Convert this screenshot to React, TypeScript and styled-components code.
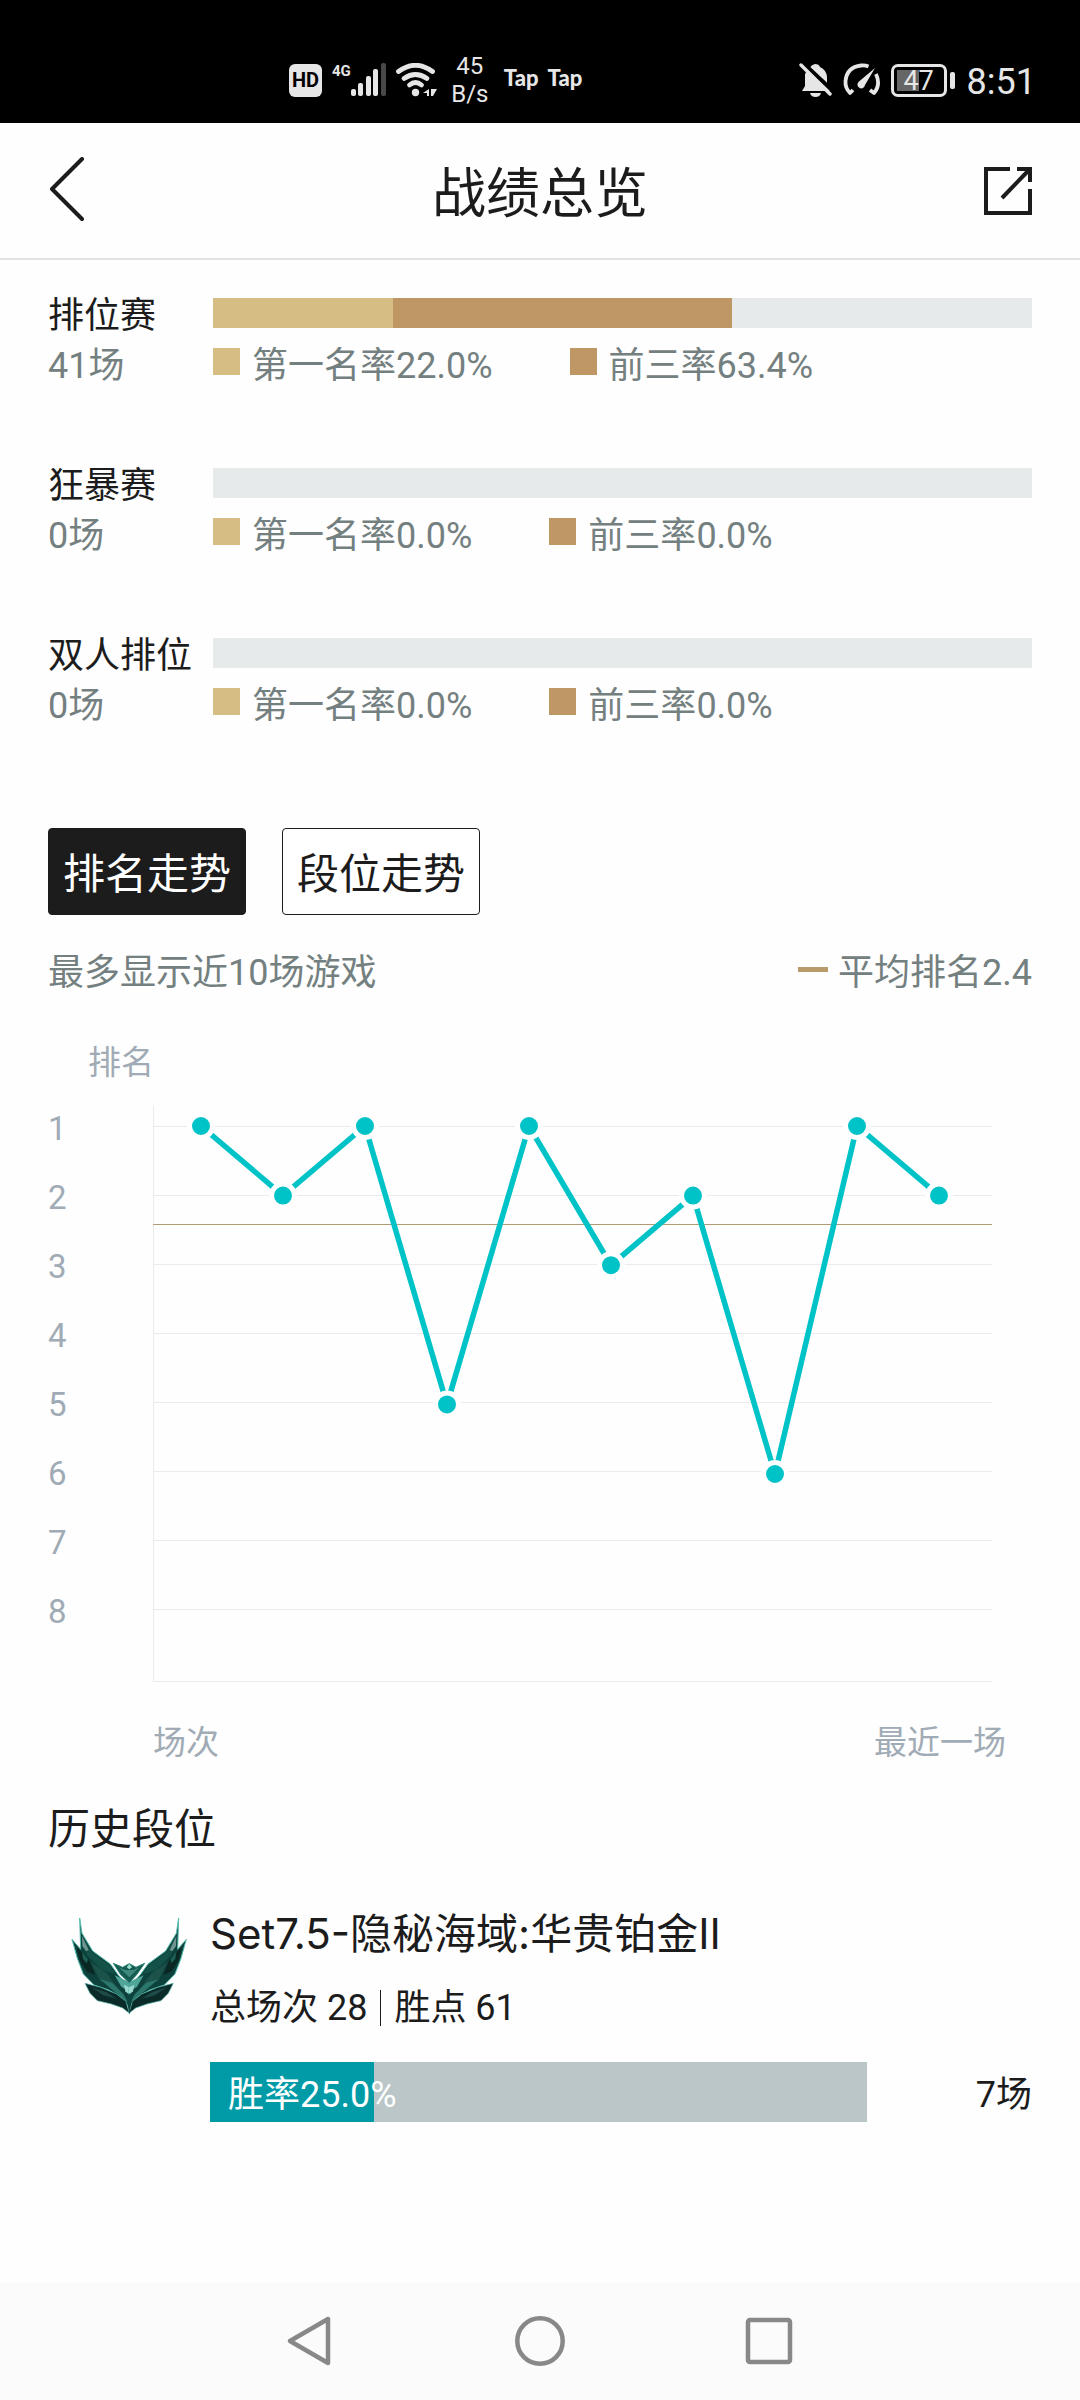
import React, { useState } from "react";
import styled, { createGlobalStyle } from "styled-components";

const FONT = 'Roboto, "Noto Sans CJK SC", sans-serif';

const color = {
  ink: "#1c1c1c",
  muted: "#748080",
  axis: "#a0abb5",
  grid: "#ebebeb",
  gold: "#d6bd84",
  bronze: "#bf9765",
  track: "#e6eaea",
  series: "#00c3c8",
  average: "#b09c74",
  status: "#e6e6e6",
};

const GlobalStyle = createGlobalStyle`
  *, *::before, *::after { box-sizing: border-box; }
  body { margin: 0; background: #fefefe; color: ${color.ink}; font-family: ${FONT}; }
  h1, h2, h3, p { margin: 0; font-weight: 400; }
  button { padding: 0; border: 0; background: none; color: inherit; font-family: inherit; }
  svg { display: block; }
`;

const Page = styled.div`
  display: flex;
  flex-direction: column;
  min-height: 100vh;
`;

/* ---------- status bar ---------- */

const StatusBar = styled.div`
  display: flex;
  justify-content: space-between;
  align-items: center;
  height: 123px;
  padding: 37px 44px 0 289px;
  background: #000;
  color: ${color.status};
`;

const StatusGroup = styled.div<{ $gap: number }>`
  display: flex;
  align-items: center;
  gap: ${(p) => p.$gap}px;
`;

const HdBadge = styled.span`
  width: 33px;
  border-radius: 6px;
  background: ${color.status};
  color: #000;
  font-size: 20px;
  font-weight: 700;
  line-height: 33px;
  text-align: center;
`;

const Signal = styled.span`
  display: flex;
  align-items: flex-start;
  font-size: 15px;
  font-weight: 700;
  line-height: 16px;
`;

const NetSpeed = styled.span`
  width: 44px;
  font-size: 24px;
  line-height: 28px;
  text-align: center;
`;

const TapMarks = styled.span`
  display: flex;
  gap: 9px;
  padding: 0 0 4px 2px;
  font-family: Lato, sans-serif;
  font-size: 22px;
  font-weight: 900;
  line-height: 28px;
`;

const Battery = styled.span`
  display: flex;
  align-items: center;
  gap: 3px;
  &::after {
    content: "";
    width: 5px;
    height: 17px;
    border-radius: 2px;
    background: ${color.status};
  }
`;

const BatteryCell = styled.span`
  width: 56px;
  height: 33px;
  border: 3px solid ${color.status};
  border-radius: 7px;
  background: linear-gradient(#666, #666) 3px 3px / 22px 21px no-repeat;
  font-size: 27px;
  line-height: 28px;
  text-align: center;
`;

const Clock = styled.time`
  padding: 4px 0 0 2px;
  font-size: 36px;
  line-height: 40px;
`;

/* ---------- header ---------- */

const Header = styled.header`
  display: grid;
  grid-template-columns: 52px 1fr 52px;
  align-items: center;
  height: 137px;
  padding: 0 46px;
  border-bottom: 2px solid #e2e2e2;
`;

const Title = styled.h1`
  padding-top: 8px;
  font-size: 54px;
  line-height: 72px;
  text-align: center;
`;

const IconButton = styled.button<{ $align?: string }>`
  display: flex;
  align-items: center;
  justify-content: ${(p) => p.$align ?? "center"};
  cursor: pointer;
`;

/* ---------- mode summaries ---------- */

const Main = styled.main`
  padding: 32px 48px 0;
`;

const Modes = styled.section`
  display: grid;
  gap: 72px;
`;

const Mode = styled.article`
  display: grid;
  grid-template-columns: 165px 1fr;
  grid-template-rows: 48px 48px;
  row-gap: 2px;
  align-items: center;
  font-size: 36px;
  line-height: 48px;
`;

const ModeName = styled.h2`
  font-size: 36px;
  white-space: nowrap;
`;

const Track = styled.div`
  display: flex;
  height: 30px;
  margin-bottom: 6px;
  background: ${color.track};
`;

const Segment = styled.div<{ $color: string }>`
  background: ${(p) => p.$color};
`;

const Muted = styled.span`
  color: ${color.muted};
`;

const Legend = styled.div`
  display: flex;
  gap: 77px;
  color: ${color.muted};
`;

const LegendItem = styled.span<{ $color: string }>`
  display: flex;
  align-items: center;
  gap: 12px;
  &::before {
    content: "";
    width: 27px;
    height: 27px;
    margin-bottom: 9px;
    background: ${(p) => p.$color};
  }
`;

/* ---------- trend ---------- */

const Tabs = styled.div`
  display: flex;
  gap: 36px;
  margin-top: 98px;
`;

const Tab = styled.button<{ $active: boolean }>`
  width: 198px;
  height: 87px;
  padding-top: 6px;
  border: 1px solid ${color.ink};
  border-radius: 4px;
  background: ${(p) => (p.$active ? color.ink : "#fff")};
  color: ${(p) => (p.$active ? "#fff" : color.ink)};
  font-size: 42px;
  line-height: 60px;
  cursor: pointer;
`;

const TrendInfo = styled.div`
  display: flex;
  justify-content: space-between;
  margin-top: 34px;
  color: ${color.muted};
  font-size: 36px;
  line-height: 48px;
`;

const AverageKey = styled.span`
  display: flex;
  align-items: center;
  gap: 10px;
  &::before {
    content: "";
    width: 30px;
    height: 5px;
    margin-bottom: 7px;
    background: #b99a6a;
  }
`;

const Chart = styled.svg`
  width: 100%;
  height: auto;
  margin-top: 38px;
  font-family: ${FONT};
  font-size: 33px;
`;

/* ---------- history ---------- */

const SectionTitle = styled.h2`
  margin-top: 35px;
  font-size: 42px;
  line-height: 60px;
`;

const HistoryRow = styled.article`
  display: grid;
  grid-template-columns: 162px 1fr;
  margin-top: 30px;
`;

const HistoryBody = styled.div`
  padding-top: 14px;
`;

const SeasonName = styled.h3`
  font-family: Inter, "Noto Sans CJK SC", sans-serif;
  font-size: 42px;
  line-height: 60px;
`;

const SeasonStats = styled.p`
  display: flex;
  align-items: center;
  gap: 13px;
  margin-top: 20px;
  font-size: 36px;
  line-height: 48px;
`;

const Divider = styled.span`
  width: 1px;
  height: 36px;
  background: ${color.ink};
`;

const WinRow = styled.div`
  display: grid;
  grid-template-columns: 1fr 165px;
  align-items: center;
  margin-top: 30px;
  font-size: 36px;
  line-height: 54px;
`;

const WinBar = styled.div<{ $rate: number }>`
  padding: 6px 0 0 18px;
  background: linear-gradient(to right, #009ba7 ${(p) => p.$rate}%, #bbc6c9 ${(p) => p.$rate}%);
  color: #fff;
`;

const WinGames = styled.span`
  padding-top: 6px;
  text-align: right;
`;

/* ---------- system navigation ---------- */

const SystemNav = styled.nav`
  display: flex;
  align-items: center;
  justify-content: center;
  gap: 177px;
  height: 117px;
  margin-top: auto;
  padding-bottom: 2px;
  background: #fbfbfb;
`;

/* ---------- data ---------- */

const modes = [
  { name: "排位赛", games: 41, first: 22.0, top3: 63.4 },
  { name: "狂暴赛", games: 0, first: 0, top3: 0 },
  { name: "双人排位", games: 0, first: 0, top3: 0 },
];

const ranks = [1, 2, 1, 5, 1, 3, 2, 6, 1, 2];
const AVERAGE = 2.4;

/* ---------- icons ---------- */

const SignalBars = () => (
  <svg width="35" height="34" viewBox="0 0 35 34" aria-hidden="true" fill={color.status}>
    <rect x="0" y="26" width="5" height="7" rx="2" />
    <rect x="7" y="20" width="5" height="13" rx="2" />
    <rect x="15" y="13" width="5" height="20" rx="2" />
    <rect x="22" y="6" width="5" height="27" rx="2" />
    <rect x="30" y="0" width="5" height="33" rx="2" fill="#484848" />
  </svg>
);

const Wifi = () => (
  <svg width="42" height="34" viewBox="0 0 42 34" aria-hidden="true">
    <g fill="none" stroke={color.status} strokeWidth="4.8" strokeLinecap="round">
      <path d="M2.500 8.500Q19.500-4 36.500 8.500" />
      <path d="M8 15.500Q19.500 7.500 31 15.500" />
      <path d="M13.500 22Q19.500 17 25.500 22" />
    </g>
    <circle cx="19.500" cy="29.500" r="3.700" fill={color.status} />
    <path d="M33 26v7h-2v-3h-4zM35 26h6l-4 7h-2z" fill={color.status} />
  </svg>
);

const BellOff = () => (
  <svg width="34" height="36" viewBox="0 0 34 36" aria-hidden="true">
    <path
      d="M11 5.500Q12.500 2.500 16 2Q20 2 21 5Q27.500 8 28 15V24L31 29H3L6 24V14Q6 9 11 5.500Z"
      fill={color.status}
    />
    <path d="M11 31h11q-1 4-5.500 4T11 31z" fill={color.status} />
    <path d="M3.500 0.500L35 30" stroke="#000" strokeWidth="4" />
    <path d="M2 3L31 32" stroke={color.status} strokeWidth="3.400" strokeLinecap="round" />
  </svg>
);

const Gauge = () => (
  <svg width="38" height="34" viewBox="0 0 38 34" aria-hidden="true">
    <g fill="none" stroke={color.status} strokeWidth="3.800" strokeLinejoin="round">
      <path d="M10 27L7 30Q2 25 2.500 18Q4 4 18 2.500Q22 2 25.500 3.500" />
      <path d="M33 11Q38 22 31 30L27 27" />
    </g>
    <path d="M32 5L22 22A3.800 3.800 0 1 1 16 18.500Z" fill={color.status} />
  </svg>
);

const Emblem = () => {
  const wing = (
    <>
      <path
        d="M89 84L96 130L128 183L181 222L204 254L238 292V352L214 322L176 300L132 285L100 252L82 205L66 148L92 178Z"
        fill="#0d423c"
        stroke="#58bdb0"
        strokeWidth="3"
      />
      <path d="M95 132L124 185L178 226L196 252L156 240L112 196Z" fill="#145146" />
      <path d="M96 138L116 180L108 184L97 168Z" fill="#6f9690" />
      <path d="M80 172L116 208L136 256L110 244L90 212Z" fill="#0a2724" />
      <path d="M96 186L114 208L110 220L99 206Z" fill="#1d6156" />
      <path d="M122 216L170 250L208 300L150 272Z" fill="#1c5249" />
      <path d="M150 268L186 278L220 312L236 340L190 302Z" fill="#2c776d" />
      <path
        d="M105 280L152 292L200 312L228 334L238 370L218 354L184 342L142 332L120 310Z"
        fill="#0b2b29"
        stroke="#58bdb0"
        strokeWidth="2"
      />
      <path d="M124 292L168 306L200 326L160 316Z" fill="#1e4b47" />
      <path d="M194 256L238 276V306L214 290Z" fill="#4fa598" />
      <path d="M222 284L238 292V314L226 304Z" fill="#9bd8ce" />
    </>
  );
  return (
    <svg width="162" height="150" viewBox="-6 0 486 450" role="img" aria-label="华贵铂金">
      {wing}
      <g transform="translate(475 0) scale(-1 1)">{wing}</g>
      <path d="M237 308L246 326L238 374L230 326Z" fill="#0c4540" />
      <path d="M190 220L218 232L238 221L258 232L284 220L260 254L238 278L212 254Z" fill="#155a50" stroke="#2b8175" strokeWidth="3" />
      <path d="M206 232L238 262L268 232L250 240H226Z" fill="#3f887d" />
      <path d="M230 232L238 222L246 232L238 238Z" fill="#9bdccf" />
    </svg>
  );
};

/* ---------- chart ---------- */

const RankChart = () => {
  const x = (i: number) => 153 + i * 82;
  const y = (rank: number) => 91 + (rank - 1) * 69.6;
  const gridY = (rank: number) => 91.5 + (rank - 1) * 69;
  return (
    <Chart viewBox="0 0 984 730" role="img" aria-label="排名走势">
      <g fill={color.axis}>
        <text x="40" y="39">排名</text>
        <text x="105" y="719">场次</text>
        <text x="958" y="719" textAnchor="end">最近一场</text>
        {[1, 2, 3, 4, 5, 6, 7, 8].map((rank) => (
          <text key={rank} x="0" y={gridY(rank) + 13}>{rank}</text>
        ))}
      </g>
      <g stroke={color.grid} strokeWidth="1">
        <path d="M105.500 70V647" />
        {[1, 2, 3, 4, 5, 6, 7, 8].map((rank) => (
          <path key={rank} d={`M105 ${gridY(rank)}H944`} />
        ))}
        <path d="M105 646.500H944" />
      </g>
      <path d="M105 189.500H944" stroke={color.average} strokeWidth="1" />
      <polyline
        points={ranks.map((rank, i) => `${x(i)},${y(rank)}`).join(" ")}
        fill="none"
        stroke={color.series}
        strokeWidth="5.5"
      />
      {ranks.map((rank, i) => (
        <circle key={i} cx={x(i)} cy={y(rank)} r="11.5" fill={color.series} stroke="#fefefe" strokeWidth="5" />
      ))}
    </Chart>
  );
};

export default function App() {
  const [tab, setTab] = useState(0);
  return (
    <Page>
      <GlobalStyle />
      <StatusBar>
        <StatusGroup $gap={10}>
          <HdBadge>HD</HdBadge>
          <Signal>
            4G
            <SignalBars />
          </Signal>
          <Wifi />
          <NetSpeed>45 B/s</NetSpeed>
          <TapMarks>
            <span>Tap</span>
            <span>Tap</span>
          </TapMarks>
        </StatusGroup>
        <StatusGroup $gap={10}>
          <BellOff />
          <Gauge />
          <Battery>
            <BatteryCell>47</BatteryCell>
          </Battery>
          <Clock>8:51</Clock>
        </StatusGroup>
      </StatusBar>

      <Header>
        <IconButton aria-label="返回" $align="flex-start">
          <svg width="44" height="68" viewBox="0 0 44 68" fill="none" stroke={color.ink} strokeWidth="4">
            <path d="M36 2L6 32L36 62" strokeLinecap="round" strokeLinejoin="round" />
          </svg>
        </IconButton>
        <Title>战绩总览</Title>
        <IconButton aria-label="分享">
          <svg width="48" height="50" viewBox="0 0 48 50" fill="none" stroke={color.ink} strokeWidth="4">
            <path d="M26 3H2V47H46V23" />
            <path d="M33 3H46V16M45 4L18 32" />
          </svg>
        </IconButton>
      </Header>

      <Main>
        <Modes>
          {modes.map((m) => (
            <Mode key={m.name}>
              <ModeName>{m.name}</ModeName>
              <Track>
                <Segment $color={color.gold} style={{ width: `${m.first}%` }} />
                <Segment $color={color.bronze} style={{ width: `${m.top3 - m.first}%` }} />
              </Track>
              <Muted>{m.games}场</Muted>
              <Legend>
                <LegendItem $color={color.gold}>第一名率{m.first.toFixed(1)}%</LegendItem>
                <LegendItem $color={color.bronze}>前三率{m.top3.toFixed(1)}%</LegendItem>
              </Legend>
            </Mode>
          ))}
        </Modes>

        <section>
          <Tabs>
            {["排名走势", "段位走势"].map((name, i) => (
              <Tab key={name} $active={tab === i} aria-pressed={tab === i} onClick={() => setTab(i)}>
                {name}
              </Tab>
            ))}
          </Tabs>
          <TrendInfo>
            <span>最多显示近10场游戏</span>
            <AverageKey>平均排名{AVERAGE}</AverageKey>
          </TrendInfo>
          <RankChart />
        </section>

        <section>
          <SectionTitle>历史段位</SectionTitle>
          <HistoryRow>
            <Emblem />
            <HistoryBody>
              <SeasonName>Set7.5-隐秘海域:华贵铂金II</SeasonName>
              <SeasonStats>
                <span>总场次 28</span>
                <Divider />
                <span>胜点 61</span>
              </SeasonStats>
              <WinRow>
                <WinBar $rate={25}>胜率25.0%</WinBar>
                <WinGames>7场</WinGames>
              </WinRow>
            </HistoryBody>
          </HistoryRow>
        </section>
      </Main>

      <SystemNav>
        <IconButton aria-label="后退">
          <svg width="52" height="52" viewBox="0 0 52 52" fill="none" stroke="#888" strokeWidth="4.500">
            <path d="M43 4V48L5 26Z" strokeLinejoin="round" />
          </svg>
        </IconButton>
        <IconButton aria-label="主页">
          <svg width="52" height="52" viewBox="0 0 52 52" fill="none" stroke="#888" strokeWidth="4.500">
            <circle cx="26" cy="26" r="22.700" />
          </svg>
        </IconButton>
        <IconButton aria-label="最近任务">
          <svg width="52" height="52" viewBox="0 0 52 52" fill="none" stroke="#888" strokeWidth="4.500">
            <rect x="5" y="5" width="42" height="42" rx="2" />
          </svg>
        </IconButton>
      </SystemNav>
    </Page>
  );
}
